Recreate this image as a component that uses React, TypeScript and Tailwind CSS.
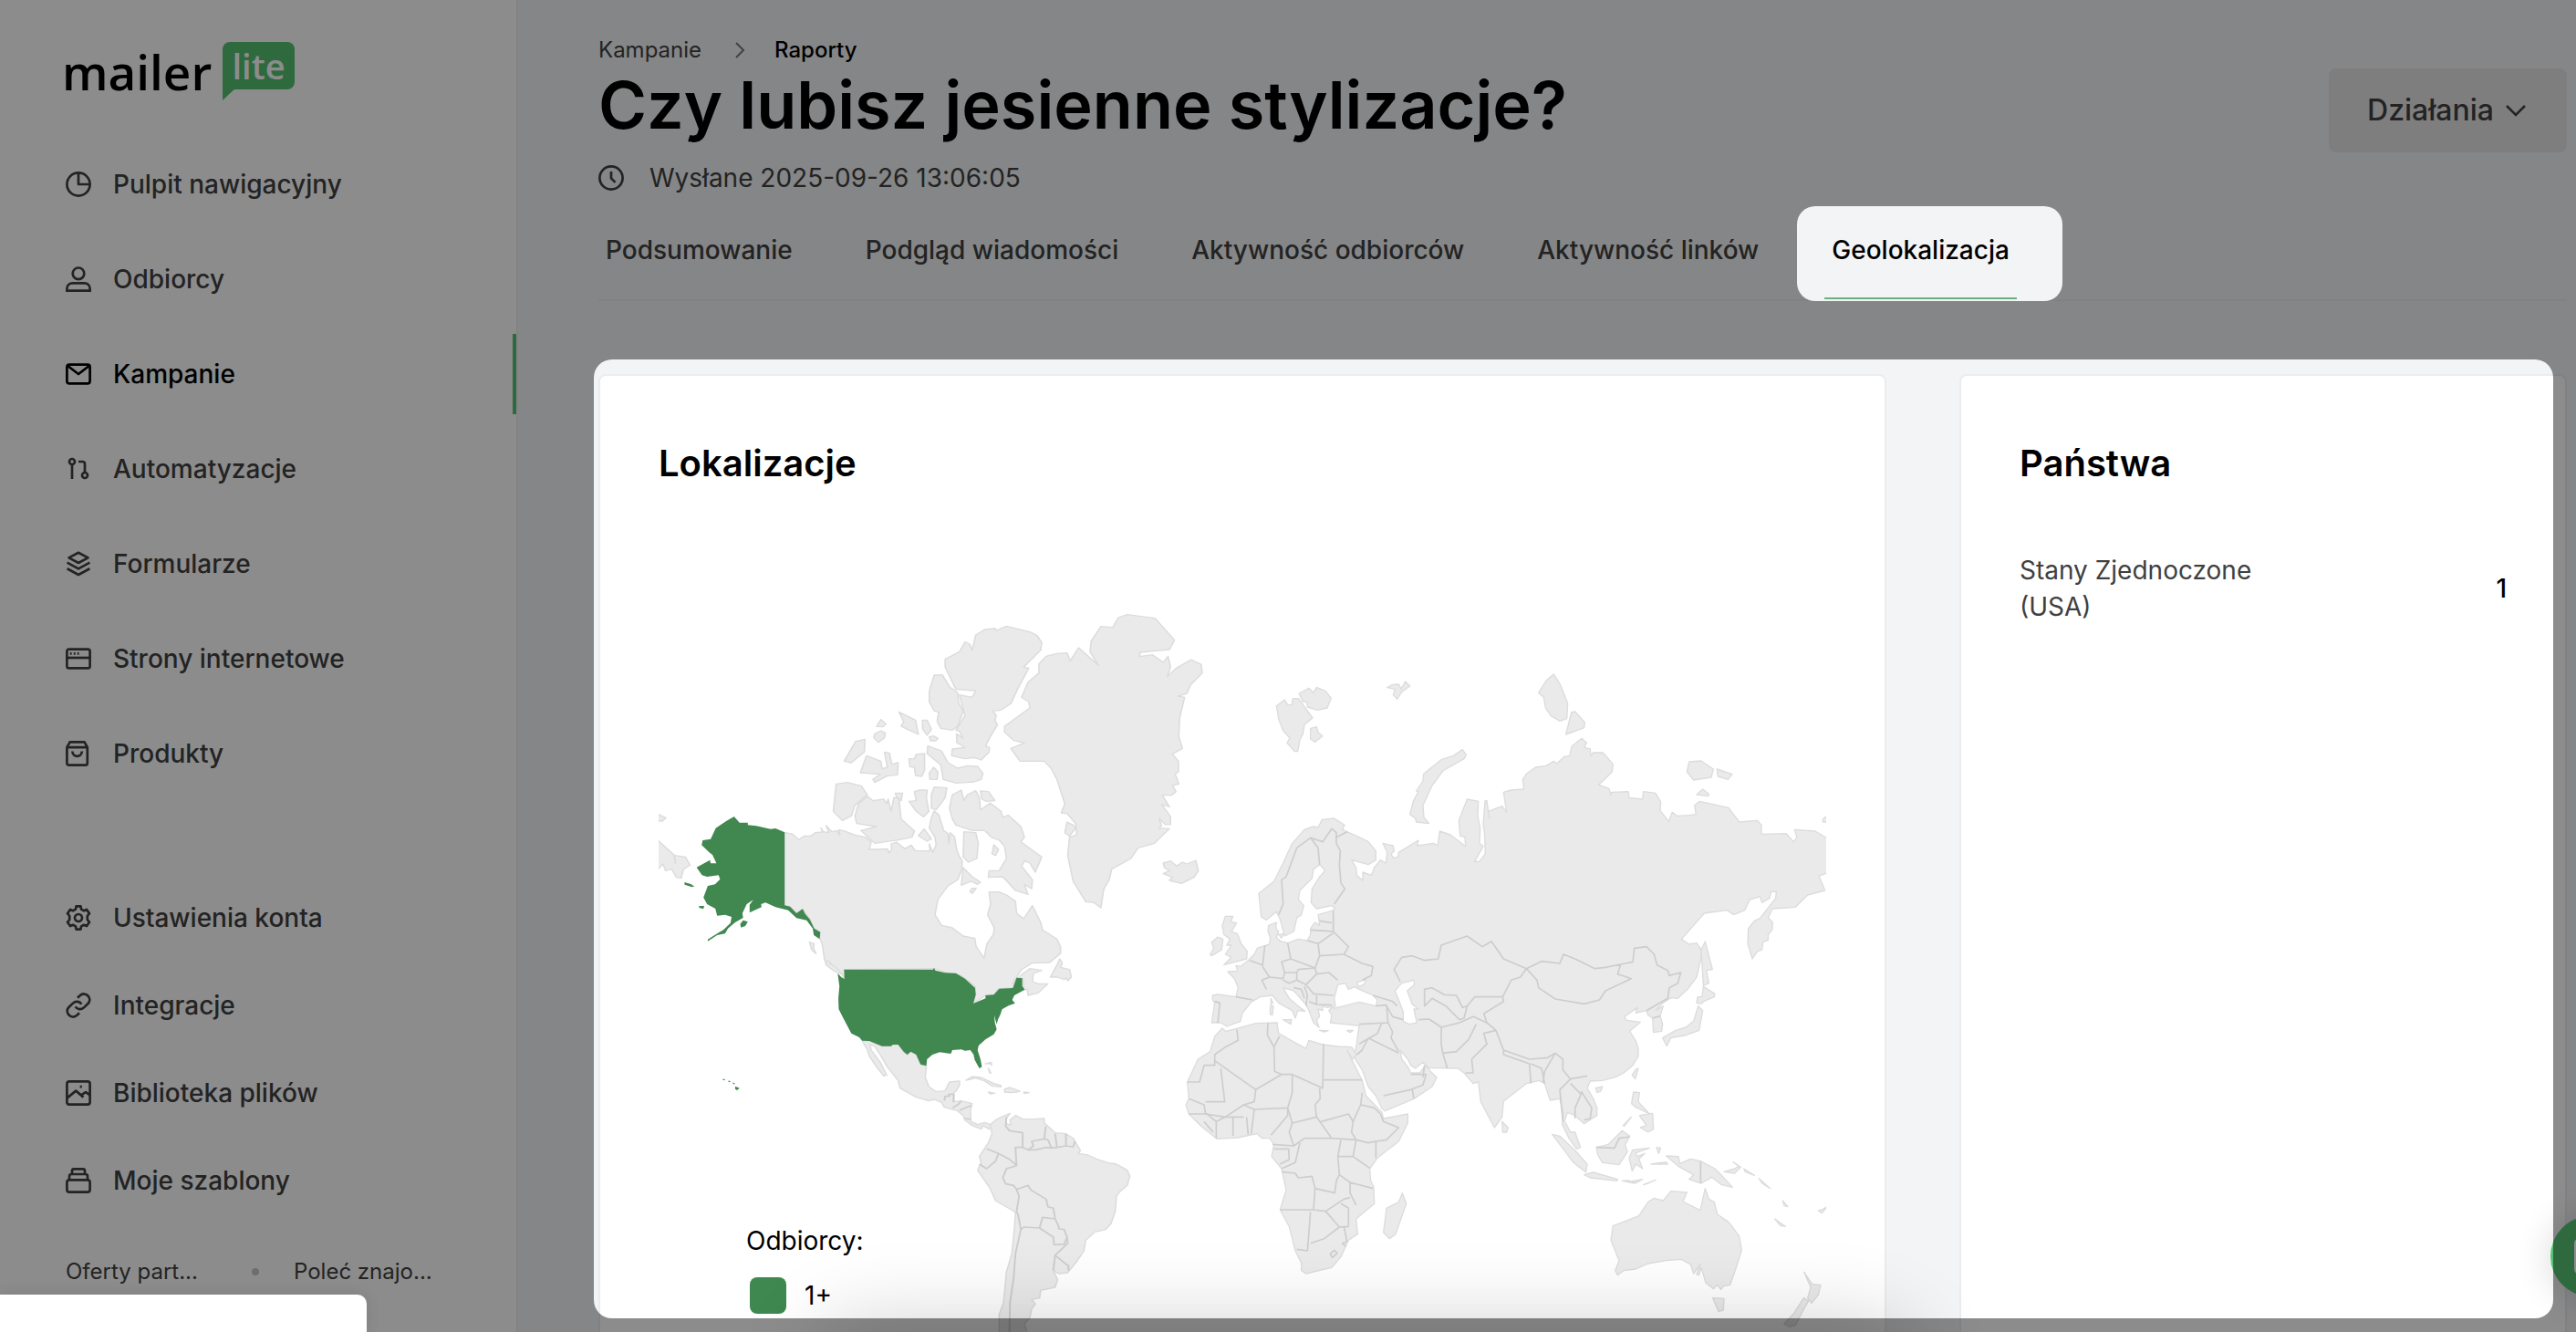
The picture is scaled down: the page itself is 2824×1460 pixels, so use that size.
import type { ReactNode } from "react";

type NavEntry = { label: string; icon: ReactNode; active?: boolean };

function Icon({ children }: { children: ReactNode }) {
  return (
    <svg
      viewBox="0 0 28 28"
      className="h-7 w-7 shrink-0"
      fill="none"
      stroke="currentColor"
      strokeWidth="2.7"
      strokeLinejoin="round"
      aria-hidden="true"
    >
      {children}
    </svg>
  );
}

const mainNav: NavEntry[] = [
  {
    label: "Pulpit nawigacyjny",
    icon: (
      <Icon>
        <circle cx="14" cy="14" r="12.6" />
        <path d="M14 1.5V14h12.5" />
      </Icon>
    ),
  },
  {
    label: "Odbiorcy",
    icon: (
      <Icon>
        <circle cx="14" cy="7.8" r="6.3" />
        <path d="M1.4 26.6v-2.2c0-3.6 2.8-6 6.2-6h12.8c3.4 0 6.2 2.4 6.2 6v2.2z" strokeLinejoin="miter" />
      </Icon>
    ),
  },
  {
    label: "Kampanie",
    active: true,
    icon: (
      <Icon>
        <rect x="1.4" y="3.6" width="25.2" height="20.8" rx="2.6" />
        <path d="m2.2 5 11.8 9 11.8-9" />
      </Icon>
    ),
  },
  {
    label: "Automatyzacje",
    icon: (
      <Icon>
        <circle cx="7" cy="6" r="3" />
        <path d="M7 9v16M14 6h4.5c2 0 2.5 1.2 2.5 2.5V18" />
        <circle cx="21" cy="21" r="3" />
      </Icon>
    ),
  },
  {
    label: "Formularze",
    icon: (
      <Icon>
        <path d="m14 1.8 10.5 5.6L14 13 3.5 7.4z" />
        <path d="M1.6 12.6 14 19.4l12.4-6.8M1.6 19.2 14 26l12.4-6.8" />
      </Icon>
    ),
  },
  {
    label: "Strony internetowe",
    icon: (
      <Icon>
        <rect x="1.4" y="3.6" width="25.2" height="20.8" rx="2.2" />
        <path d="M1.4 13h25.2" />
        <path d="M4.8 8.4h1.8M8.8 8.4h1.8M12.8 8.4h1.8" />
      </Icon>
    ),
  },
  {
    label: "Produkty",
    icon: (
      <Icon>
        <path d="M1.4 7.2 4.6 1.4h16l3.2 5.8v17.2c0 1.4-.8 2.2-2.2 2.2h-18c-1.400 0-2.200-.8-2.200-2.200zM1.400 7.200h22.400" />
        <path d="M7.400 11.600c0 7 10.400 7 10.400 0" />
      </Icon>
    ),
  },
];

const accountNav: NavEntry[] = [
  {
    label: "Ustawienia konta",
    icon: (
      <Icon>
        <circle cx="14" cy="14" r="4" />
        <path d="M11 4.600 11.500 1.400h5l.5 3.200 3 1.600 3-1.200 3 4.200-2.200 2.800v4l2.200 2.800-3 4.200-3-1.200-3 1.600-.5 3.200h-5l-.5-3.200-3-1.600-3 1.200-3-4.200L4.200 16v-4L2 9.200 5 5l3 1.200z" />
      </Icon>
    ),
  },
  {
    label: "Integracje",
    icon: (
      <Icon>
        <path d="m13 5.800 2.600-2.600c5.800-5.200 14 2.400 9.200 8.600L20 16.400c-3 2.800-7.400 2.200-9.400-1" />
        <path d="m15 22.200-2.600 2.600c-5.800 5.200-14-2.400-9.200-8.600L8 11.600c3-2.800 7.400-2.200 9.400 1" />
      </Icon>
    ),
  },
  {
    label: "Biblioteka plików",
    icon: (
      <Icon>
        <rect x="1.400" y="1.400" width="25.200" height="25.200" rx="2.600" />
        <path d="m1.800 19.400 9.400-7.800 8.200 7M16.400 16.600l5.600-3.400 4.400 3M15.600 7.200h2.200" />
      </Icon>
    ),
  },
  {
    label: "Moje szablony",
    icon: (
      <Icon>
        <rect x="1.400" y="13.400" width="25.200" height="13.200" rx="2.600" />
        <path d="M4 13v-3.600c0-1.400 1-2.400 2.400-2.400h15.200c1.400 0 2.400 1 2.400 2.400V13M7 6.600V3.400c0-1.200.8-2 2-2h10c1.200 0 2 .8 2 2v3.200" />
      </Icon>
    ),
  },
];

const tabs = ["Podsumowanie", "Podgląd wiadomości", "Aktywność odbiorców", "Aktywność linków", "Geolokalizacja"];

const countries = [{ name: "Stany Zjednoczone (USA)", count: 1 }];

const usa = [
  "M265 762 280 782 303 782 303 790 327 793 366 803 380 801 405 814 405 1054 420 1058 438 1080 455 1066 462 1082 475 1100 487 1130 504 1142 502 1165 486 1152 483 1130 466 1103 438 1096 415 1070 380 1060 352 1045 340 1050 341 1060 308 1078 308 1052 318 1036 300 1050 288 1080 290 1095 268 1110 248 1130 240 1147 218 1152 192 1172 192 1166 220 1145 235 1135 255 1112 258 1092 240 1085 218 1088 213 1065 190 1050 180 1028 192 990 212 985 226 968 222 955 190 960 176 955 161 929 198 905 200 916 216 916 205 888 196 880 175 856 178 840 200 836 214 800 243 777Z",
  "M127 978 145 984 155 992 148 994 128 986Z M168 1056 182 1056 180 1066 168 1062Z M282 1115 290 1103 303 1108 296 1122 284 1127Z",
  "M552 1277 562 1290 571 1296 570 1265 817 1265 819 1259 823 1268 850 1276 880 1277 905 1295 933 1325 935 1348 928 1377 962 1360 962 1350 985 1348 1000 1328 1038 1326 1048 1292 1064 1294 1064 1320 1071 1331 1042 1350 1036 1365 1044 1376 1026 1384 1008 1396 1003 1414 997 1428 993 1445 986 1415 988 1440 993 1462 985 1478 962 1495 943 1515 940 1530 948 1560 952 1585 945 1590 932 1562 929 1545 920 1530 905 1532 895 1528 870 1530 866 1542 835 1537 815 1545 800 1560 798 1582 782 1577 770 1545 755 1535 745 1545 735 1535 720 1512 705 1512 700 1517 675 1517 640 1500 620 1499 612 1488 590 1475 570 1430 555 1395 554 1360 557 1320Z",
  "M234 1625 239 1625 239 1629 234 1629Z M249 1631 254 1631 254 1635 249 1635Z M260 1636 268 1640 264 1643Z M268 1649 280 1655 273 1662 268 1658Z",
];

const americas = [
  "M405 814 428 820 444 838 460 826 478 826 490 815 510 813 506 800 512 812 528 815 520 792 536 812 550 808 558 823 556 805 574 811 600 823 630 830 645 845 640 870 660 870 690 868 694 882 702 870 700 852 715 846 738 868 756 856 768 875 808 875 806 852 816 880 825 855 822 830 806 800 812 765 820 744 833 757 846 808 858 818 860 850 864 815 876 828 882 870 888 890 898 910 895 940 885 970 858 990 830 1035 822 1085 840 1120 870 1128 900 1155 932 1162 936 1190 958 1228 966 1180 984 1150 986 1128 968 1085 976 1050 972 1010 1000 1010 1020 1020 1045 1040 1048 1080 1068 1098 1092 1055 1115 1110 1120 1135 1160 1165 1170 1190 1170 1212 1140 1242 1090 1244 1062 1265 1036 1312 1062 1282 1085 1262 1118 1268 1095 1278 1092 1305 1110 1312 1135 1312 1108 1342 1080 1350 1078 1332 1068 1330 1066 1295 1048 1292 1038 1325 998 1328 985 1348 962 1350 928 1378 935 1345 933 1320 895 1285 865 1280 820 1262 570 1265 571 1295 560 1275 540 1262 530 1238 516 1235 510 1185 503 1162 504 1142 487 1130 475 1100 455 1066 438 1080 420 1058 405 1054Z",
  "M620 1499 640 1500 675 1517 700 1517 705 1512 720 1512 735 1535 745 1545 755 1535 770 1545 782 1577 798 1582 795 1620 805 1650 825 1667 850 1664 862 1635 890 1632 890 1645 880 1665 874 1670 872 1700 895 1697 925 1706 920 1730 922 1765 940 1775 960 1768 975 1775 980 1788 972 1790 955 1778 950 1790 925 1778 905 1760 900 1745 885 1730 848 1718 840 1702 820 1692 805 1697 770 1685 725 1655 720 1630 690 1585 670 1545 655 1518 642 1512 645 1530 670 1570 688 1612 680 1615 660 1585 640 1550 635 1530Z",
  "M908 1629 925 1617 950 1620 985 1640 1005 1647 1005 1651 980 1648 960 1632 935 1622Z M1015 1658 1030 1653 1058 1665 1050 1668 1030 1670 1015 1668Z M970 1668 988 1672 975 1674Z M1068 1668 1083 1670 1070 1673Z M962 1575 978 1570 979 1580 974 1574Z M970 1590 977 1606 974 1605Z",
  "M518 1238 545 1255 565 1280 545 1272 520 1250Z M474 1175 487 1180 485 1195 492 1213 480 1200Z",
  "M1168 1230 1175 1245 1170 1258 1195 1265 1200 1290 1190 1302 1186 1292 1180 1298 1160 1290 1142 1290 1150 1272 1160 1250Z",
  "M1030 1738 1020 1755 1018 1770 1032 1778 1030 1760 1045 1745 1065 1757 1095 1757 1125 1755 1125 1770 1135 1780 1155 1802 1185 1805 1205 1820 1225 1860 1220 1870 1245 1875 1270 1888 1300 1900 1325 1905 1355 1925 1362 1945 1355 1975 1335 1995 1325 2010 1322 2060 1310 2100 1295 2120 1265 2128 1240 2155 1235 2190 1215 2225 1190 2262 1165 2265 1150 2255 1162 2285 1155 2310 1115 2320 1112 2345 1090 2350 1100 2365 1090 2380 1085 2410 1070 2430 1080 2470 1000 2470 1000 2400 1012 2360 1020 2260 1035 2200 1042 2120 1045 2065 1038 2058 990 2025 975 1985 940 1925 950 1900 945 1880 970 1835 980 1805 975 1775 990 1760 1010 1748Z",
  "M1330 108 1355 98 1432 110 1486 182 1472 213 1390 222 1390 236 1425 230 1455 255 1468 235 1475 270 1466 302 1490 275 1532 246 1560 262 1563 290 1530 330 1520 358 1495 366 1514 370 1500 440 1498 500 1508 538 1480 556 1497 580 1497 615 1488 622 1498 655 1480 660 1490 680 1478 692 1452 692 1472 730 1450 722 1475 762 1475 788 1460 788 1443 768 1450 792 1443 800 1472 802 1430 850 1385 865 1365 900 1312 935 1305 970 1290 1000 1282 1062 1262 1045 1240 1042 1205 975 1190 890 1195 830 1215 822 1212 785 1188 752 1172 750 1182 720 1160 640 1145 605 1125 580 1058 580 1032 538 1070 520 1040 512 1015 485 1015 465 1085 405 1082 385 1062 370 1080 320 1110 290 1110 260 1130 235 1160 226 1188 224 1197 250 1220 207 1275 265 1252 220 1255 185 1282 137 1315 140Z",
  "M1188 780 1205 790 1212 800 1195 826 1182 815Z",
  "M960 147 988 143 992 150 1020 136 1085 155 1105 167 1118 190 1115 215 1068 270 1082 274 1050 345 1033 390 1005 412 982 415 992 430 988 445 995 460 975 500 962 530 973 535 972 550 950 576 930 568 905 572 868 562 870 540 905 535 882 518 882 490 900 505 890 482 880 478 905 430 890 362 925 370 935 348 880 344 850 270 850 245 890 220 905 188 918 195 925 215 935 165Z",
  "M820 297 842 296 862 335 885 355 888 390 900 415 885 465 870 478 838 472 828 450 832 418 820 415 806 385 806 350Z",
  "M802 530 840 546 858 585 885 603 912 595 940 597 955 620 950 640 930 648 880 652 845 640 838 592 800 555Z",
  "M722 418 768 445 776 492 745 475 728 465 735 450Z M787 445 800 445 812 475 800 495 788 475Z M806 500 818 497 830 505 825 513 810 513Z M672 443 686 458 678 467 660 466Z M655 490 672 480 684 487 682 503 665 518 652 502Z",
  "M602 515 628 508 626 550 590 585 570 580Z M632 562 672 580 675 605 690 600 682 550 696 553 702 590 720 585 718 625 690 628 655 650 650 640 670 623 615 618Z M750 572 765 572 770 557 793 555 793 610 785 630 768 627 765 600 752 598Z M818 600 830 615 828 640 808 640 806 620Z",
  "M548 655 580 650 618 662 634 690 600 725 590 760 565 775 540 745Z",
  "M635 695 650 710 680 705 688 720 692 705 700 745 708 700 722 700 728 770 765 810 758 830 725 838 655 850 617 808 660 795 605 785 600 760 610 720Z M712 685 732 685 728 710 716 700Z",
  "M765 680 780 675 800 675 798 700 805 745 790 763 770 745 750 712 770 710Z M820 665 855 668 850 700 825 740 812 735 812 690Z M792 803 812 835 800 843 776 825Z",
  "M870 690 895 675 902 710 912 690 935 677 945 700 948 740 975 718 1005 745 1010 765 1025 757 1060 795 1070 830 1060 845 1100 880 1118 895 1100 945 1085 915 1070 908 1062 925 1092 970 1090 1000 1070 985 1080 1018 1045 1005 1022 975 1010 960 970 962 972 940 1000 940 1020 900 1015 860 1000 840 978 830 960 808 925 808 880 790 870 770 862 735Z",
  "M948 678 970 680 988 710 965 712 952 705Z M902 812 935 815 942 850 938 900 915 912 900 895Z M900 930 925 960 948 978 940 985 922 975 895 988Z M925 998 936 998 925 1015 919 1008Z M985 855 998 870 990 890 980 885Z",
  "M1455 915 1475 908 1492 925 1508 912 1520 918 1545 906 1552 940 1540 962 1505 982 1472 972 1480 962 1455 950 1472 940 1458 930Z",
  "M50 836 98 888 102 915 100 890 130 895 143 922 125 935 118 965 105 962 92 935 75 940 68 918 50 940Z M50 752 76 766 66 777 50 777Z",
];

const americasBorders =
  "M848 1697 850 1682 862 1682 860 1675 874 1675 874 1702M870 1720 885 1710 895 1697M890 1728 922 1712M905 1755 920 1758M1020 1750 1018 1780 1028 1795 1065 1802 1065 1850 1045 1850 1048 1910 1030 1890 998 1870 965 1855M998 1870 990 1895 965 1920 945 1905M1065 1850 1080 1858 1095 1845 1090 1830 1125 1822 1128 1790 1130 1780M1125 1822 1135 1825 1145 1852 1160 1850 1155 1805M1160 1850 1185 1845 1205 1848 1210 1830M1185 1845 1185 1805M1048 1910 1020 1920 1010 1950 1018 1970 1040 1975 1048 1988 1080 1975 1088 1990 1130 2020 1135 2045 1150 2050 1155 2085 1120 2080 1112 2115 1068 2112 1060 2120 1052 2070 1048 2062 1055 2010 1048 1988M1112 2115 1150 2145 1152 2170 1180 2168 1188 2145 1180 2120 1165 2118 1165 2110 1155 2085M1188 2145 1190 2165 1155 2205 1150 2255M1155 2205 1192 2240 1192 2255M1060 2120 1045 2200 1040 2280 1030 2360 1028 2470M1145 1852 1130 1850 1100 1858 1080 1858";

const oldWorld = [
  "M208 1350 225 1347 285 1355 292 1325 280 1295 258 1272 290 1270 285 1252 300 1255 325 1235 345 1215 355 1195 395 1182 398 1160 390 1140 392 1120 418 1110 416 1130 425 1140 418 1160 432 1172 455 1178 490 1165 520 1170 530 1150 530 1130 545 1110 560 1120 555 1085 600 1072 612 1065 600 1055 550 1065 532 1045 535 1000 560 960 578 940 560 920 540 935 535 965 495 1005 490 1035 508 1055 500 1085 485 1095 475 1140 445 1155 430 1100 418 1075 385 1102 368 1092 360 1015 410 975 440 915 470 850 510 805 540 795 555 798 568 772 608 768 642 790 635 805 650 812 690 830 720 845 745 875 745 905 720 920 665 905 680 930 682 955 702 973 702 945 730 955 740 930 760 905 778 915 782 880 768 850 802 858 805 875 795 885 802 898 818 895 820 880 885 840 880 858 935 850 948 858 955 810 990 822 1040 860 1038 830 1022 825 1018 775 1045 705 1082 712 1080 760 1088 800 1086 850 1098 860 1070 910 1085 910 1105 885 1102 810 1098 790 1104 710 1110 710 1118 768 1115 745 1160 728 1175 748 1165 682 1190 675 1232 672 1228 640 1240 622 1270 600 1305 595 1330 580 1340 588 1365 565 1382 562 1390 530 1422 505 1438 520 1430 535 1450 540 1452 563 1460 552 1492 552 1525 590 1522 615 1478 658 1512 670 1518 692 1520 682 1575 680 1578 700 1622 705 1625 680 1665 685 1682 715 1680 742 1708 778 1720 748 1735 760 1775 758 1798 755 1793 725 1810 712 1905 733 1940 780 2000 775 2013 790 2013 820 2095 818 2118 845 2130 832 2122 805 2190 810 2236 838 2236 945 2202 957 2222 1005 2165 1020 2125 1060 2050 1065 2035 1095 2050 1110 2048 1135 2035 1150 2035 1168 2018 1175 2015 1200 2000 1205 1983 1230 1968 1180 1970 1130 1990 1105 2010 1095 2060 1030 2062 1008 2045 1010 2040 1030 2015 1045 2008 1025 1975 1035 1958 1070 1922 1085 1900 1070 1825 1080 1790 1120 1750 1165 1775 1182 1800 1178 1815 1200 1815 1225 1800 1290 1770 1330 1738 1360 1715 1358 1685 1378 1665 1400 1690 1385 1680 1418 1688 1445 1685 1468 1658 1472 1655 1425 1640 1415 1635 1400 1600 1408 1605 1390 1562 1420 1570 1432 1615 1438 1580 1468 1600 1500 1608 1525 1608 1550 1590 1580 1560 1605 1535 1618 1490 1630 1450 1632 1440 1655 1460 1690 1472 1720 1472 1745 1430 1772 1400 1745 1375 1735 1365 1765 1372 1775 1385 1800 1400 1800 1418 1850 1405 1855 1380 1820 1358 1775 1362 1740 1350 1690 1318 1695 1300 1640 1282 1630 1240 1640 1165 1698 1160 1750 1135 1785 1090 1700 1082 1635 1065 1640 1035 1605 1015 1590 918 1588 900 1570 875 1590 860 1580 850 1560 825 1530 830 1560 850 1585 860 1605 890 1605 908 1580 920 1595 945 1620 930 1650 870 1690 775 1730 765 1722 745 1680 720 1650 700 1595 680 1565 672 1545 680 1520 690 1450 640 1445 595 1440 600 1415 590 1400 600 1390 612 1392 640 1385 690 1372 745 1385 750 1365 735 1350 690 1330 675 1322 655 1330 645 1310 620 1315 608 1360 612 1385 585 1390 570 1385 570 1400 555 1395 560 1420 550 1430 558 1455 540 1440 525 1400 515 1380 475 1335 440 1325 460 1360 495 1390 512 1402 488 1400 480 1425 470 1400 425 1375 405 1350 365 1355 335 1372 305 1410 300 1435 255 1452 235 1440 205 1440 215 1375 208 1365Z",
  "M240 1458 250 1468 285 1460 350 1442 420 1440 425 1475 470 1500 515 1525 525 1498 570 1512 620 1518 665 1520 680 1545 668 1560 650 1530 670 1570 700 1630 712 1680 765 1735 770 1755 850 1740 850 1770 820 1830 750 1885 725 1920 728 1960 738 1980 740 2035 680 2085 685 2135 655 2155 630 2210 600 2245 515 2265 500 2255 500 2230 480 2190 460 2110 430 2055 450 1990 435 1920 402 1880 410 1840 395 1820 370 1820 355 1805 290 1818 222 1822 170 1780 130 1740 120 1710 130 1690 125 1635 160 1560 200 1535 215 1485Z",
  "M832 2000 845 2035 810 2135 790 2150 770 2130 780 2050 820 2030Z",
  "M250 1090 275 1090 268 1108 287 1112 270 1140 290 1148 302 1180 322 1205 320 1230 245 1250 270 1225 250 1215 270 1185 255 1185 265 1165 245 1150 240 1120Z M225 1158 242 1165 238 1200 205 1220 200 1215 212 1195 205 1175Z",
  "M418 398 445 378 455 395 468 395 472 374 490 374 537 438 510 460 505 490 495 510 488 548 478 548 453 520 462 503 440 480 425 440Z M492 357 525 340 540 355 550 337 580 350 598 373 585 405 553 412 520 402 518 385 505 385Z M530 472 550 467 555 485 570 497 545 517 530 507Z",
  "M782 338 800 328 820 327 828 342 842 318 857 333 830 352 815 376 802 362 808 343Z",
  "M1330 294 1350 325 1376 390 1373 440 1350 448 1320 430 1303 405 1297 370 1280 355 1305 315Z M1388 420 1400 417 1432 452 1430 470 1370 492Z",
  "M1000 562 1030 542 1042 560 1035 572 965 612 930 660 900 725 903 765 920 785 878 780 875 768 857 755 868 712 885 680 878 678 900 645 902 622 960 575Z",
  "M1775 582 1815 579 1855 606 1848 633 1790 642 1768 615Z M1867 606 1917 623 1903 640 1870 630Z M1800 690 1820 672 1840 688 1838 695Z M2214 772 2232 756 2232 780 2216 780Z",
  "M1828 1173 1852 1265 1832 1268 1840 1310 1822 1318 1815 1200Z",
  "M1822 1321 1860 1345 1858 1355 1825 1369 1815 1378 1800 1375 1803 1355 1818 1355Z M1805 1385 1820 1400 1808 1465 1760 1482 1715 1490 1702 1516 1688 1490 1730 1466 1765 1455 1790 1435Z",
  "M1600 1593 1608 1590 1598 1625 1588 1612Z M1468 1655 1490 1650 1485 1665 1472 1670Z",
  "M1592 1668 1612 1670 1608 1700 1645 1740 1600 1718 1586 1706Z M1612 1745 1655 1738 1658 1790 1640 1800 1615 1785 1635 1778Z M1558 1778 1585 1750 1562 1780Z",
  "M1470 1850 1510 1840 1555 1795 1580 1813 1565 1840 1572 1865 1545 1907 1490 1900 1475 1875Z M1325 1807 1350 1813 1400 1860 1440 1905 1436 1932 1395 1900Z M1430 1940 1460 1932 1540 1955 1538 1960 1450 1950Z",
  "M1555 1960 1575 1958 1595 1968Z M1585 1962 1622 1955 1600 1967Z M1625 1973 1665 1957 1640 1968Z",
  "M1590 1858 1645 1852 1600 1868 1605 1880 1630 1870 1610 1888 1622 1920 1600 1905 1588 1928 1578 1885Z M1668 1850 1682 1852 1675 1870Z M1650 1905 1700 1898 1705 1905Z",
  "M1700 1878 1740 1880 1745 1903 1780 1888 1812 1895 1860 1920 1885 1945 1918 1981 1880 1972 1850 1948 1815 1968 1775 1955 1790 1940 1740 1912Z M1890 1930 1925 1920 1938 1912 1920 1898 1945 1915 1925 1935Z",
  "M1955 1920 1990 1942 1960 1930Z M2005 1952 2042 1985 2015 1968Z M2083 2025 2100 2045 2088 2042Z M2057 2085 2092 2110 2075 2107Z M2200 2058 2215 2054 2232 2042 2212 2066Z",
  "M1160 1765 1180 1785 1175 1800 1162 1800Z M440 1430 468 1430 465 1445Z M398 1385 408 1385 405 1415 397 1412Z M400 1360 406 1375 400 1380Z M650 1465 670 1465 660 1472Z M560 1465 588 1466 575 1470Z M425 1150 440 1148 435 1162Z",
  "M1828 1985 1840 2020 1858 2030 1868 2070 1905 2095 1940 2142 1948 2188 1925 2260 1910 2302 1888 2306 1880 2318 1868 2302 1855 2315 1830 2295 1815 2245 1808 2270 1800 2268 1812 2235 1790 2265 1780 2235 1750 2218 1700 2222 1640 2232 1600 2250 1560 2255 1540 2270 1532 2255 1545 2222 1518 2155 1525 2108 1610 2075 1640 2030 1660 2017 1690 2025 1715 1994 1768 1998 1755 2028 1812 2057Z",
  "M1853 2345 1890 2347 1888 2385 1872 2390Z M2153 2260 2170 2285 2180 2300 2208 2302 2200 2335 2178 2362 2165 2345 2175 2310Z M2152 2345 2168 2355 2145 2395 2125 2435 2105 2440 2088 2430 2120 2395Z",
];

const seas = "M808 1335 830 1310 870 1300 872 1315 848 1335 865 1380 885 1395 870 1395 880 1440 855 1445 835 1435 835 1405 820 1365ZM682 1308 712 1298 708 1312 690 1322Z";

const oldWorldBorders = [
  // Africa
  "M288 1462 292 1498 250 1520 215 1545 215 1580 180 1580 165 1635 125 1635M215 1565 350 1660 435 1610 412 1600 410 1520 388 1480 390 1440M410 1520 428 1485M435 1610 470 1610 570 1655 573 1510M573 1628 700 1628M235 1590 248 1700 185 1700M350 1660 345 1700 310 1710 250 1750 185 1740 180 1710 130 1690M470 1612 470 1670 455 1720 345 1725 310 1710M455 1720 470 1770 550 1750 545 1710 562 1690 560 1655",
  "M550 1750 600 1820 510 1820 475 1845 405 1840M470 1770 460 1800 475 1845M455 1725 455 1745 400 1810M345 1725 335 1805M320 1750 325 1808M275 1750 275 1812M310 1750 250 1750 220 1765 220 1820M130 1740 190 1740 220 1765M180 1765 210 1800M565 1765 655 1740 670 1765 665 1800 680 1825 600 1820M700 1670 695 1710 740 1720 760 1740M695 1710 670 1765M760 1740 770 1765 820 1785 780 1825 745 1830 745 1885M680 1825 720 1835 745 1830",
  "M670 1880 725 1918M630 1825 620 1880 670 1880 680 1825M620 1880 625 1940 660 1965 735 1985M660 1965 660 2000 680 2040M435 1930 480 1935 490 1950 535 1945 545 1985 610 2000 615 1960 625 1940M545 1985 540 2055 430 2055M540 2055 580 2060 640 2020 660 2015M530 2062 520 2190 485 2185M580 2060 625 2112 575 2150 530 2165M625 2112 655 2110 655 2050 630 2035M640 2110 650 2160 635 2165 645 2175M495 1835 480 1900 435 1920M410 1855 458 1855 460 1890 430 1905M595 2200 608 2188 618 2198 602 2212Z",
  // Europe
  "M425 1085 440 1050 435 970 450 960 485 865 530 832 570 845 600 802 615 815 615 850 628 875 625 920 630 980 643 1000 608 1050M530 832 555 865 560 920M612 832 650 812M605 1072 605 1140 655 1190 640 1215 560 1220M530 1135 580 1138 605 1140M560 1105 600 1112M520 1170 555 1180 605 1145M455 1178 465 1230 545 1260 560 1220 555 1180M380 1185 372 1255M330 1235 372 1250",
  "M640 1215 700 1245 735 1255 730 1285 700 1300M545 1260 550 1280 590 1275 620 1300M372 1255 395 1290 370 1300 385 1330M395 1290 440 1295 445 1275 435 1240 465 1230M445 1275 485 1275 490 1265 545 1260M485 1275 485 1300 460 1310 440 1300M485 1300 515 1315 550 1280M515 1315 540 1345 605 1350M550 1350 550 1380 600 1382M510 1320 520 1350 515 1385M475 1325 500 1330 510 1360M525 1370 550 1380M285 1355 340 1365M215 1370 232 1375 225 1440",
  // Asia
  "M825 1305 805 1265 830 1225 865 1220 905 1235 950 1230 960 1185 1045 1155 1095 1190 1125 1172 1165 1230 1240 1262 1220 1290 1190 1300 1162 1355 1070 1355 1045 1385 1030 1390 1010 1350 970 1348 930 1325 905 1330 905 1385 930 1360 975 1385 1020 1430 1035 1425 1045 1385M885 1430 920 1428 960 1455 1020 1440 1065 1420 1110 1440 1140 1465M960 1455 960 1510 965 1540 1010 1535 1050 1495 1075 1445M965 1540 980 1590M1140 1465 1100 1475 1110 1510 1060 1560 1065 1605 1040 1605",
  "M1162 1355 1165 1370 1100 1410 1110 1440M1140 1465 1165 1530 1250 1560 1310 1555 1335 1540 1360 1560 1360 1595 1385 1625 1350 1660 1360 1765M1165 1530 1165 1545 1250 1575 1255 1640M1385 1625 1440 1615M1385 1640 1420 1675 1400 1720 1400 1755M1420 1665 1455 1720 1450 1755 1430 1760M1255 1575 1290 1590 1300 1640M1335 1540 1300 1600 1295 1635",
  "M1240 1262 1290 1238 1350 1245 1362 1215 1400 1230 1465 1262 1500 1258 1550 1248 1540 1280 1585 1295 1500 1335 1480 1365 1430 1378 1335 1362 1280 1325 1275 1300 1240 1262M1550 1248 1590 1240 1595 1195 1635 1190 1660 1215 1670 1250 1705 1268 1710 1285 1748 1275 1738 1310 1710 1325 1705 1360 1635 1400M1655 1425 1680 1418",
  "M745 1385 780 1382 785 1440 690 1445M780 1385 800 1420 835 1430M735 1350 800 1370 815 1385M785 1440 800 1470 795 1490 820 1535M765 1440 750 1475 690 1510M720 1490 820 1540M720 1490 700 1530 682 1545M770 1680 860 1660 900 1645 910 1610 860 1610M865 1660 870 1690M905 1580 900 1620M1470 1850 1530 1852 1545 1820 1580 1815M1813 1895 1813 1967",
];

function WorldMap() {
  return (
    <svg viewBox="722 659 1280 820" className="block w-full" role="img" aria-label="Mapa lokalizacji odbiorców" strokeLinejoin="round">
      <g transform="translate(700 640) scale(0.395408 0.333333)">
        <g fill="#eaeaea" stroke="#dcdcdc" strokeWidth="4">
          {americas.map((d) => (
            <path key={d} d={d} />
          ))}
        </g>
        <path d={americasBorders} fill="none" stroke="#cdcdcd" strokeWidth="5" />
        <g fill="#408850">
          {usa.map((d) => (
            <path key={d} d={d} />
          ))}
        </g>
      </g>
      <g transform="translate(1260 640) scale(0.333333)">
        <g fill="#eaeaea" stroke="#dcdcdc" strokeWidth="4">
          {oldWorld.map((d) => (
            <path key={d} d={d} />
          ))}
          <path d={seas} fill="#fff" />
        </g>
        <g fill="none" stroke="#cdcdcd" strokeWidth="5">
          {oldWorldBorders.map((d) => (
            <path key={d} d={d} />
          ))}
        </g>
      </g>
    </svg>
  );
}

function Logo() {
  return (
    <a href="#" className="ml-[68px] flex h-16 items-start text-black" aria-label="MailerLite">
      <span className="mt-[3px] w-44 font-['Open_Sans',sans-serif] text-[53px] leading-[60px] font-semibold">mailer</span>
      <span className="relative flex h-[52px] w-[79px] items-center justify-center rounded-lg bg-[#55c272] font-['Open_Sans',sans-serif] text-[38px] leading-[48px] font-semibold text-white">
        lite
        <svg viewBox="0 0 14 20" className="absolute top-11 left-0 h-5 w-3.5" aria-hidden="true">
          <path d="M0 0h14v7L0 20z" fill="#55c272" />
        </svg>
      </span>
    </a>
  );
}

function NavLink({ entry, tall }: { entry: NavEntry; tall?: boolean }) {
  return (
    <li>
      <a
        href="#"
        aria-current={entry.active ? "page" : undefined}
        className={`flex h-[88px] items-center gap-6 pl-[72px] text-[28px] font-medium ${tall ? "mb-4" : "mb-2"} ${
          entry.active ? "border-r-4 border-[#55c272] text-black" : "text-[#404040]"
        }`}
      >
        {entry.icon}
        {entry.label}
      </a>
    </li>
  );
}

function Sidebar() {
  return (
    <aside className="w-[568px] shrink-0 border-r-2 border-[#eeeff1] bg-white pt-[46px]">
      <Logo />
      <nav aria-label="Menu główne">
        <ul className="mt-12">
          {mainNav.map((entry) => (
            <NavLink key={entry.label} entry={entry} tall />
          ))}
        </ul>
        <ul className="mt-[92px]">
          {accountNav.map((entry) => (
            <NavLink key={entry.label} entry={entry} />
          ))}
        </ul>
      </nav>
      <div className="mt-10 flex items-center pl-[72px] text-[24px] leading-8 text-[#404040]">
        <a href="#" className="w-[204px]">
          Oferty part...
        </a>
        <span className="h-2 w-2 rounded-full bg-[#c8c9cc]" />
        <a href="#" className="ml-[38px]">
          Poleć znajo...
        </a>
      </div>
    </aside>
  );
}

function Tabs() {
  return (
    <nav aria-label="Raport" className="mt-[39px] flex gap-16 border-b-2 border-[#ececee] text-[28px] leading-10 font-medium text-[#404040]">
      {tabs.map((tab) =>
        tab === "Geolokalizacja" ? (
          <a key={tab} href="#" aria-current="page" className="relative z-20 px-2 pb-[34px] text-black">
            <span className="absolute -top-7 -right-[50px] -bottom-0.5 -left-[30px] -z-10 rounded-[20px] bg-[#f3f4f6]" />
            {tab}
            <span className="absolute inset-x-0 bottom-0 h-0.5 bg-[#6cb081]" />
          </a>
        ) : (
          <a key={tab} href="#" className="px-2 pb-[34px]">
            {tab}
          </a>
        ),
      )}
    </nav>
  );
}

export default function App() {
  return (
    <div className="relative flex h-screen overflow-hidden bg-[#f3f4f6] font-['Inter',sans-serif]">
      <Sidebar />
      <main className="min-w-0 flex-1 pt-[39px] pr-2.5 pl-[88px]">
        <header className="flex items-start justify-between">
          <div>
            <nav aria-label="Ścieżka" className="flex items-center text-[24px] leading-8 text-[#404040]">
              <a href="#">Kampanie</a>
              <svg viewBox="0 0 12 18" className="mr-8 ml-9 h-[18px] w-3" fill="none" stroke="#777" strokeWidth="2" aria-hidden="true">
                <path d="m2 1 8 8-8 8" />
              </svg>
              <span className="font-medium text-black">Raporty</span>
            </nav>
            <h1 className="text-[72px] leading-[88px] font-semibold text-black">Czy lubisz jesienne stylizacje?</h1>
            <p className="mt-4 flex items-center gap-7 text-[28px] leading-10 text-[#404040]">
              <Icon>
                <circle cx="14" cy="14" r="12.6" />
                <path d="M14 7v7.400l4.500 4.500" />
              </Icon>
              Wysłane 2025-09-26 13:06:05
            </p>
          </div>
          <button type="button" className="mt-9 flex h-[92px] items-center gap-3 rounded-lg bg-[#e6e6e8] pr-11 pl-[42px] text-[32px] font-medium text-[#404040]">
            Działania
            <svg viewBox="0 0 24 14" className="h-3.5 w-6" fill="none" stroke="currentColor" strokeWidth="2.5" aria-hidden="true">
              <path d="m2 2 10 10L22 2" />
            </svg>
          </button>
        </header>
        <Tabs />

        <div className="relative mt-20 grid grid-cols-[minmax(0,1412fr)_minmax(0,666fr)] gap-20">
          <section className="rounded-lg border-2 border-[#ebecee] bg-white px-16 pt-[72px]">
            <h2 className="text-[40px] leading-[48px] font-semibold text-black">Lokalizacje</h2>
            <div className="relative mt-32">
              <WorldMap />
              <div className="absolute top-[680px] left-24 text-[28px] leading-10 text-black">
                <p>Odbiorcy:</p>
                <p className="mt-5 flex items-center gap-5 pl-1">
                  <span className="h-10 w-10 rounded-lg bg-[#3f8850]" />
                  1+
                </p>
              </div>
            </div>
          </section>
          <section className="rounded-lg border-2 border-[#ebecee] bg-white px-16 pt-[72px]">
            <h2 className="text-[40px] leading-[48px] font-semibold text-black">Państwa</h2>
            <table className="mt-[73px] w-full text-[28px] leading-10">
              <tbody>
                {countries.map((country) => (
                  <tr key={country.name}>
                    <th scope="row" className="w-[300px] text-left font-normal text-[#404040]">
                      {country.name}
                    </th>
                    <td className="text-right font-medium text-black">{country.count}</td>
                  </tr>
                ))}
              </tbody>
            </table>
          </section>
          {/* spotlight: everything outside of it is dimmed by its spread shadow */}
          <div className="pointer-events-none absolute -top-4 right-[15px] -left-[5px] z-10 h-[1051px] rounded-[20px] shadow-[0_0_0_3000px_rgba(0,0,0,0.45)]" />
        </div>
      </main>

      <div className="absolute -bottom-20 left-[32%] h-20 w-[42%] rounded-full shadow-[0_0_90px_10px_rgba(0,0,0,0.18)]" />
      <button
        type="button"
        aria-label="Czat"
        className="absolute -right-[60px] bottom-[39px] flex h-[88px] w-[88px] items-center rounded-full bg-[#55c272] pl-[26px] shadow-[0_2px_40px_rgba(0,0,0,0.16)]"
      >
        <span className="h-10 w-9 rounded-md border-2 border-white" />
      </button>
      <div className="absolute bottom-0 left-0 z-30 h-[41px] w-[402px] rounded-tr-[10px] bg-white shadow-[0_0_16px_rgba(0,0,0,0.1)]" />
    </div>
  );
}
